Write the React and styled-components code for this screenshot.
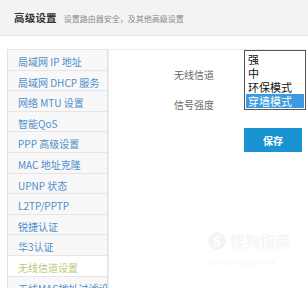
import React from "react";
import styled, { createGlobalStyle } from "styled-components";

const GlobalStyle = createGlobalStyle`
  html, body {
    margin: 0;
    padding: 0;
    background: #fff;
    font-family: "Noto Sans CJK SC", "Noto Sans", sans-serif;
    overflow: hidden;
  }
`

const Page = styled.div`
  position: relative;
  width: 308px;
  height: 288px;
  overflow: hidden;
`

const Header = styled.header`
  height: 36px;
  box-sizing: border-box;
  background: #f3f3f3;
  border-bottom: 1px solid #e6e6e6;
  display: flex;
  align-items: center;
  padding-left: 14px;
  gap: 7px;
`

const Title = styled.h1`
  margin: 0;
  font-size: 10.5px;
  font-weight: 700;
  color: #333;
  letter-spacing: 0.2px;
`

const Subtitle = styled.span`
  font-size: 8px;
  color: #8a8a8a;
  padding-top: 1px;
`

const Main = styled.div`
  display: flex;
  margin-top: 13px;
  padding-left: 7px;
`

const Sidebar = styled.ul`
  list-style: none;
  margin: 0;
  padding: 0;
  width: 101px;
  box-sizing: border-box;
  border-top: 1px solid #e3e3e3;
  border-left: 1px solid #e3e3e3;
  border-right: 1px solid #e3e3e3;
`

const NavItem = styled.li`
  height: 20.6px;
  box-sizing: border-box;
  padding: 6px 0 0 10px;
  line-height: 12px;
  font-size: 10px;
  white-space: nowrap;
  overflow: hidden;
  border-bottom: 1px solid #e6e6e6;
  background: ${p => (p.$active ? "#fff" : "#f8f8f8")};
  color: ${p => (p.$active ? "#b9cb72" : "#4f8fca")};
`

const Content = styled.section`
  position: relative;
  flex: 1;
  border-top: 1px solid #ececec;
  border-left: 1px solid #ececec;
  padding: 9px 0 0 65px;
`

const FormRow = styled.div`
  height: 30px;
  display: flex;
  align-items: center;
`

const Label = styled.span`
  font-size: 10px;
  color: #666;
`

const SaveButton = styled.button`
  margin: 9px 0 0 70px;
  width: 58px;
  height: 24px;
  border: none;
  background: #1a93d2;
  color: #fff;
  font-family: inherit;
  font-size: 10px;
  font-weight: 700;
  padding: 0;
`

const ListBox = styled.ul`
  position: absolute;
  top: 0;
  left: 135px;
  width: 62px;
  height: 60px;
  box-sizing: border-box;
  margin: 0;
  padding: 1px;
  list-style: none;
  border: 1px solid #555;
  background: #fff;
`

const Option = styled.li`
  height: 14px;
  line-height: 14px;
  font-size: 11px;
  padding-left: 2px;
  white-space: nowrap;
  overflow: hidden;
  color: ${p => (p.$selected ? "#fff" : "#111")};
  background: ${p => (p.$selected ? "#3d9ae0" : "transparent")};
`

const Watermark = styled.div`
  position: absolute;
  left: 208px;
  top: 230px;
  display: flex;
  flex-direction: column;
  gap: 6px;
  color: #f6f6f6;
`

const MarkTop = styled.div`
  display: flex;
  align-items: center;
  gap: 4px;
  font-size: 15px;
  font-weight: 700;
`

const MarkLogo = styled.span`
  width: 18px;
  height: 18px;
  border-radius: 50%;
  background: #f4f4f4;
  color: #fff;
  font-size: 13px;
  line-height: 18px;
  text-align: center;
`

const MarkLine = styled.div`
  font-size: 7px;
  letter-spacing: 0.5px;
`

const navItems = [
  "局域网 IP 地址",
  "局域网 DHCP 服务",
  "网络 MTU 设置",
  "智能QoS",
  "PPP 高级设置",
  "MAC 地址克隆",
  "UPNP 状态",
  "L2TP/PPTP",
  "锐捷认证",
  "华3认证",
  "无线信道设置",
  "无线MAC地址过滤设置",
];

const options = ["强", "中", "环保模式", "穿墙模式"];

const App = () => (
  <Page>
    <GlobalStyle />
    <Header>
      <Title>高级设置</Title>
      <Subtitle>设置路由器安全，及其他高级设置</Subtitle>
    </Header>
    <Main>
      <Sidebar>
        {navItems.map(item => (
          <NavItem key={item} $active={item === "无线信道设置"}>
            {item}
          </NavItem>
        ))}
      </Sidebar>
      <Content>
        <FormRow>
          <Label>无线信道</Label>
        </FormRow>
        <FormRow>
          <Label>信号强度</Label>
        </FormRow>
        <SaveButton>保存</SaveButton>
        <ListBox>
          {options.map(o => (
            <Option key={o} $selected={o === "穿墙模式"}>
              {o}
            </Option>
          ))}
        </ListBox>
      </Content>
    </Main>
    <Watermark>
      <MarkTop>
        <MarkLogo>S</MarkLogo>
        搜狗指南
      </MarkTop>
      <MarkLine>zhinan.sogou.com</MarkLine>
    </Watermark>
  </Page>
);

export default App;
